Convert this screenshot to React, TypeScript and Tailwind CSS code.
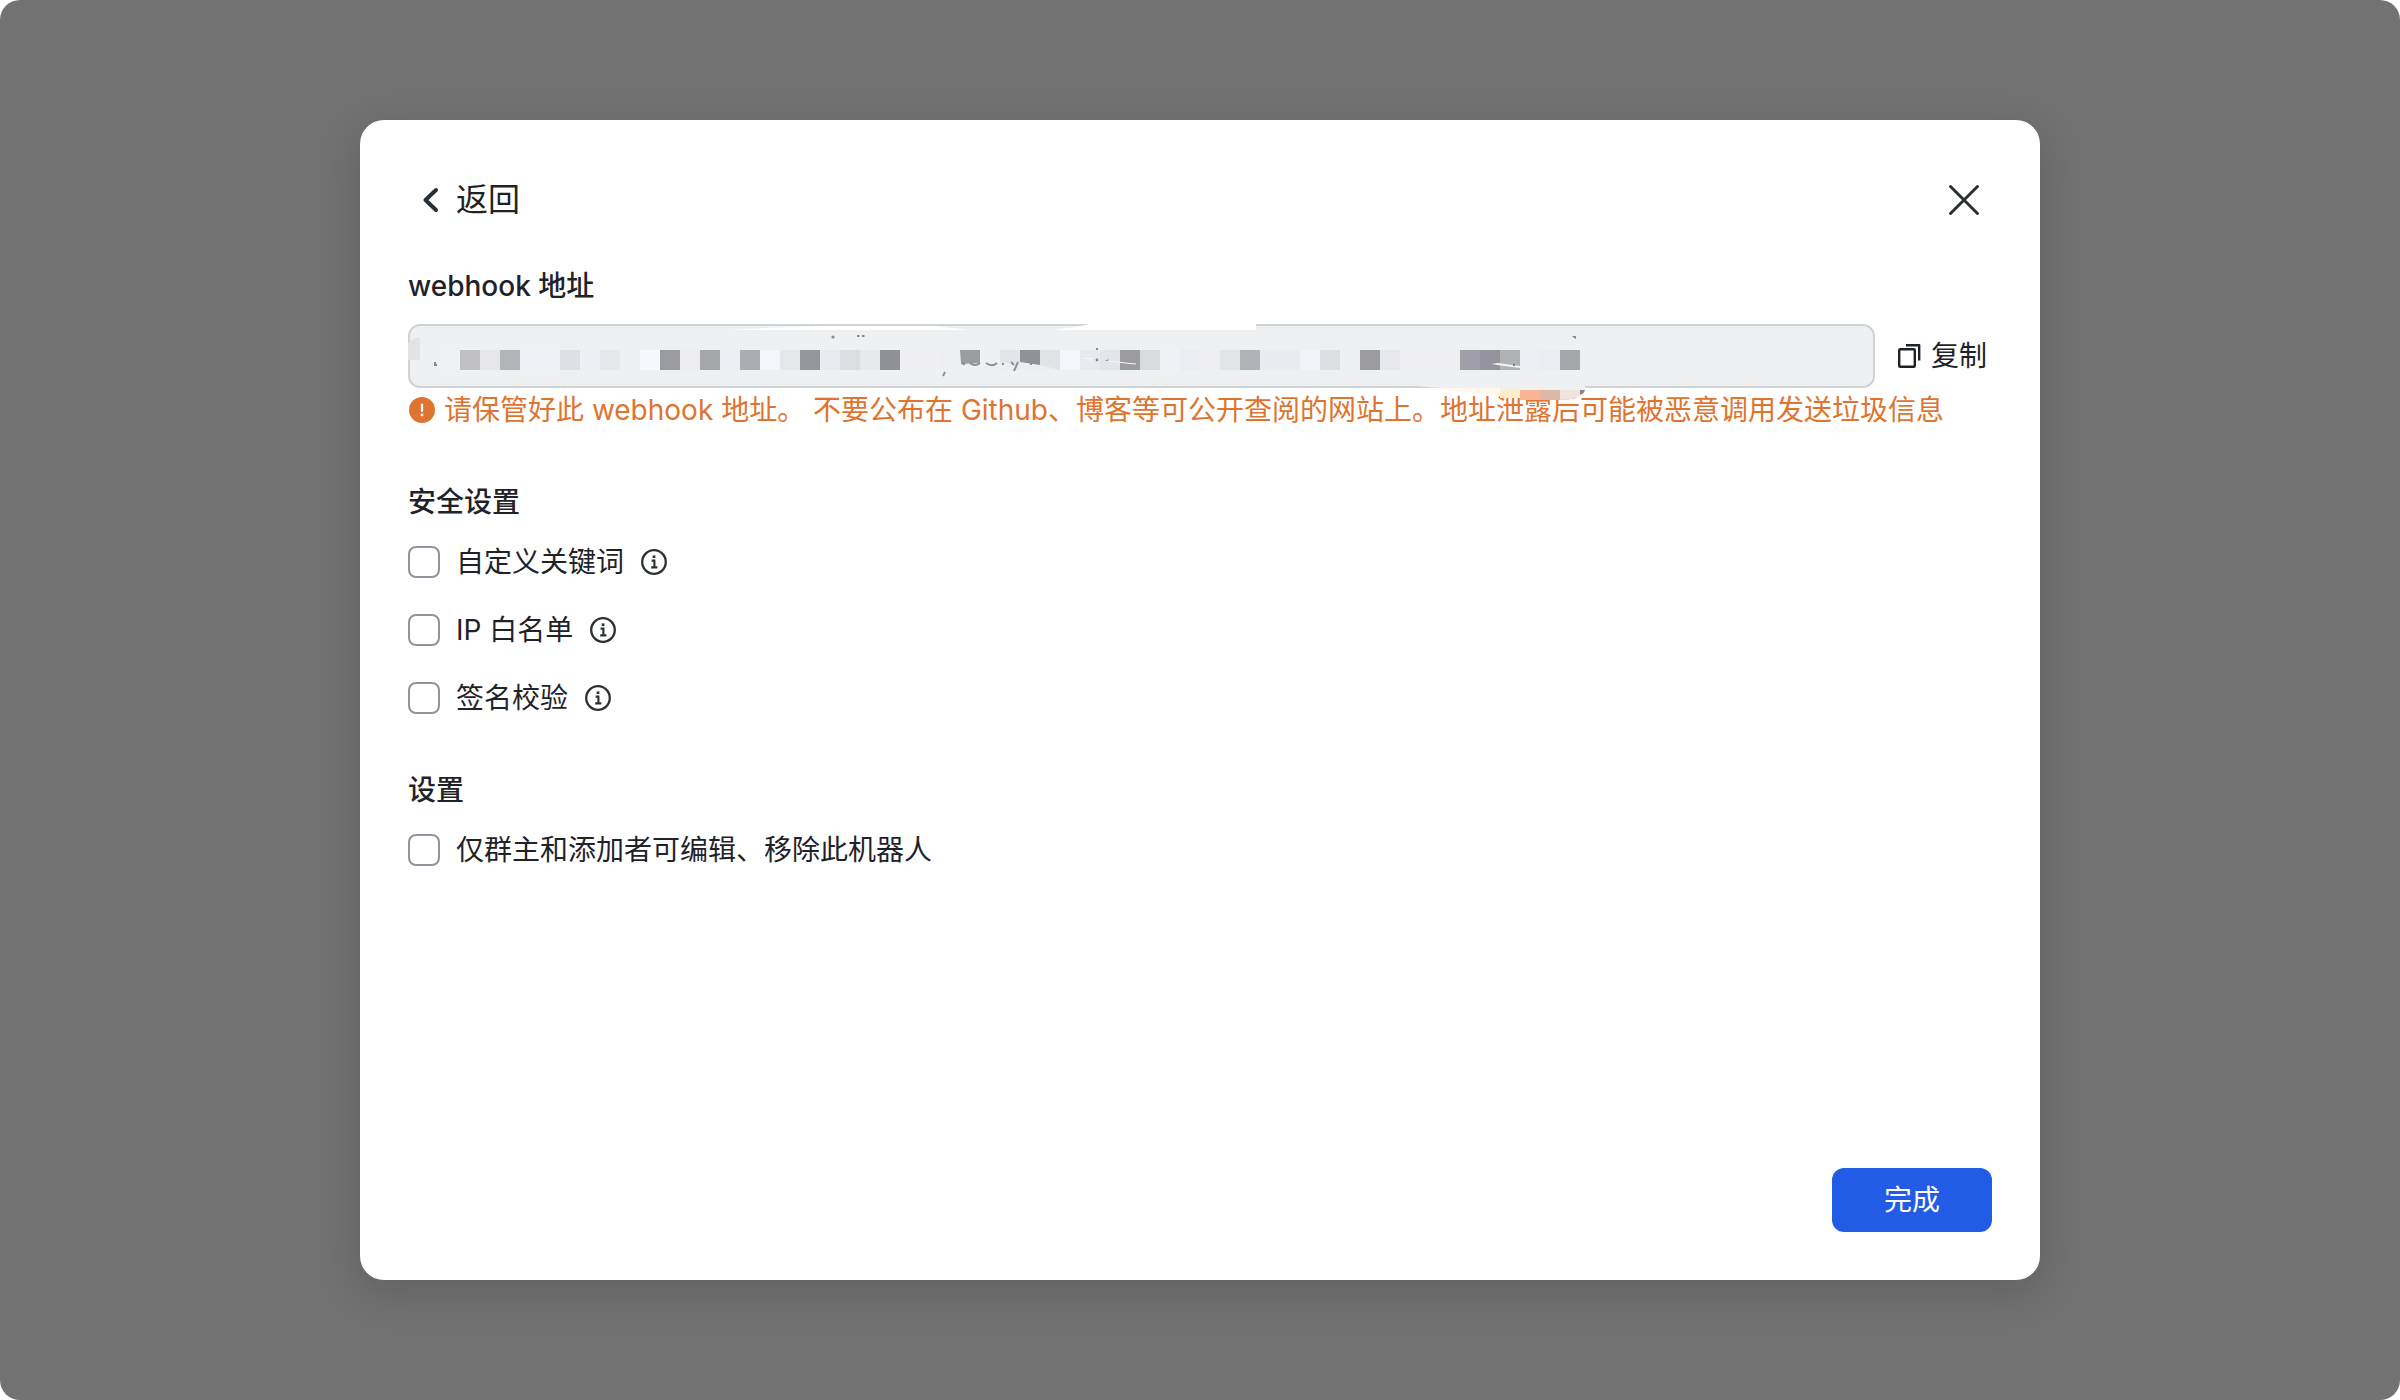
import React, { useState } from "react";

type Block = [x: number, fill: string];

/* Censor tiles, each 20 units wide, measured from the field's left edge. */
const TILES: Block[] = [
  [32, "#f0f1f5"], [52, "#bfbfc4"], [72, "#e7e7eb"], [92, "#b3b4b8"],
  [112, "#eff1f6"], [132, "#eff1f6"], [152, "#dfe0e5"], [172, "#eff0f5"],
  [192, "#e6e7eb"], [212, "#eff0f3"], [232, "#f7f8fd"], [252, "#9a9b9f"],
  [272, "#ededf2"], [292, "#a5a6aa"], [312, "#eeeff4"], [332, "#abaeb2"],
  [352, "#f5f6fb"], [372, "#e6e7e8"], [392, "#95969b"], [412, "#e9eaef"],
  [432, "#dcdde1"], [452, "#e8e9ed"], [472, "#909196"], [492, "#efeff4"],
  [512, "#efeff4"], [532, "#eeeff2"], [592, "#e4e5e9"], [632, "#e2e3e7"],
  [652, "#f5f6fb"], [672, "#e9eaee"], [692, "#e4e5ea"], [712, "#9b9b9f"],
  [732, "#dadbdf"], [752, "#f0f1f5"], [772, "#ecedf2"], [792, "#eeeef3"],
  [812, "#e3e4e6"], [832, "#b2b3b7"], [852, "#ebecf1"], [872, "#ebecf1"],
  [892, "#f2f3f8"], [912, "#dce0e3"], [932, "#eff0f1"], [952, "#9a9a9f"],
  [972, "#e7e8ed"], [992, "#eeeef3"], [1012, "#eeeef3"], [1032, "#eeeef3"],
  [1052, "#a09fa9"], [1072, "#94939e"], [1092, "#b0b1b4"], [1112, "#eeeff4"],
  [1132, "#ecedf2"], [1152, "#a6a7aa"],
];

function Mosaic() {
  return (
    <svg
      className="pointer-events-none absolute top-0 left-0"
      width="1200"
      height="84"
      viewBox="0 0 1200 84"
      aria-hidden="true"
    >
      {/* smudges across the field's border */}
      <path d="M322 6Q390 2 440 2H525Q545 4 560 6Z" fill="#fff" />
      <path d="M645 6Q670 3 682 0H848V6Z" fill="#fff" />
      <path d="M0 20Q4 14 12 13V36H0Z" fill="#e3e3e4" />
      <path d="M1008 61H1177V66H1060Q1030 64 1008 62Z" fill="#eff0f1" />

      {TILES.map(([x, fill]) => (
        <rect key={x} x={x} y="26" width="20" height="20" fill={fill} />
      ))}
      <path d="M552 26H572V39L553 40Z" fill="#9b9c9f" />
      <path d="M612 26H632V41L612 38Z" fill="#919298" />
      <path d="M592 39Q625 38 652 46H592Z" fill="#edeef1" />

      {/* specks left uncovered */}
      <g fill="#85888d">
        <path d="M26 38H28V40H29V42H26Z" />
        <circle cx="425" cy="13" r="1.6" />
        <rect x="449" y="11" width="2.5" height="2" />
        <rect x="454" y="11" width="2.5" height="2" />
        <rect x="688" y="24" width="2" height="2" />
        <circle cx="689" cy="36" r="1.4" />
        <path d="M697 37L701 35L700 37Z" />
        <path d="M1164 12H1168V15L1166 14Z" />
        <rect x="1105" y="40" width="2" height="2" />
      </g>
      <g stroke="#8d9095" strokeWidth="2" fill="none">
        <path d="M537 48L535 52" />
        <path d="M554 39L557 40.5" />
        <path d="M562 39Q567 43 572 39" />
        <path d="M578 39Q584 43.5 589 39" />
        <path d="M595 39V41M603 38L606 41" />
        <path d="M610 38L606 47" />
        <path d="M623 38V41" />
      </g>
      <path d="M676 34L684 35" stroke="#fbfbfd" strokeWidth="1" />
      <path d="M700 37L722 39.5L728 40" stroke="#f6f7fa" strokeWidth="1" fill="none" />
      <path d="M1083 40L1090 39L1112 42V44L1096 42Z" fill="#f1f2f5" />
      <rect x="1105" y="40" width="2" height="2" fill="#777a80" />

      {/* warm tiles that spill onto the notice below */}
      <path d="M1032 64H1092V72Q1060 68 1032 66Z" fill="#fff8ec" />
      <rect x="1092" y="66" width="20" height="8" fill="#ffeccb" />
      <rect x="1112" y="66" width="20" height="10" fill="#fab495" />
      <rect x="1132" y="66" width="20" height="10" fill="#dcb8a6" />
      <path d="M1152 66H1172V72Q1164 76 1152 76Z" fill="#efe4de" />
      <path d="M1172 66H1177Q1176 70 1172 71Z" fill="#8f8480" />
    </svg>
  );
}

function InfoIcon() {
  return (
    <svg width="28" height="28" viewBox="0 0 28 28" fill="none" stroke="#2b2f36" aria-hidden="true">
      <circle cx="14" cy="14" r="11.8" strokeWidth="2.3" />
      <path d="M11.6 12.6H14.4V19M11.2 19.4H17.4" strokeWidth="2.1" />
      <rect x="12.7" y="7.4" width="2.7" height="2.7" fill="#2b2f36" stroke="none" />
    </svg>
  );
}

function Option({ id, label, info }: { id: string; label: string; info?: boolean }) {
  const [checked, setChecked] = useState(false);
  return (
    <div className="flex h-11 items-center">
      <input
        id={id}
        type="checkbox"
        checked={checked}
        onChange={(e) => setChecked(e.target.checked)}
        className="size-8 shrink-0 appearance-none rounded-lg border-2 border-[#8f959e] bg-white checked:border-[#245be6] checked:bg-[#245be6]"
      />
      <label htmlFor={id} className="pl-4">
        {label}
      </label>
      {info && (
        <button type="button" aria-label={`${label}说明`} className="ml-4">
          <InfoIcon />
        </button>
      )}
    </div>
  );
}

export default function App() {
  return (
    <div className="min-h-screen bg-white font-['Inter','Noto_Sans_CJK_SC',sans-serif] text-[28px] leading-11 text-[#1f2329]">
      <div className="flex min-h-screen items-center justify-center rounded-[20px] bg-[#727272] px-6 py-[120px]">
        <main className="flex min-h-[1160px] w-full max-w-[1680px] flex-col rounded-3xl bg-white p-12 shadow-[0_12px_40px_rgba(31,35,41,0.22)]">
          <header className="flex h-16 items-center justify-between pr-3 pl-3">
            <button type="button" className="flex items-center gap-3 text-[32px] leading-12">
              <svg width="24" height="32" viewBox="0 0 24 32" fill="none" stroke="#2b2f36" strokeWidth="4" strokeLinecap="round" strokeLinejoin="round" aria-hidden="true">
                <path d="M16 6L5.5 16L16 26" />
              </svg>
              返回
            </button>
            <button type="button" aria-label="关闭">
              <svg width="32" height="32" viewBox="0 0 32 32" fill="none" stroke="#2b2f36" strokeWidth="3" strokeLinecap="round" aria-hidden="true">
                <path d="M2.5 2.5L29.5 29.5M29.5 2.5L2.5 29.5" />
              </svg>
            </button>
          </header>

          <section className="mt-8">
            <label htmlFor="webhook" className="block font-medium">
              webhook 地址
            </label>
            <div className="mt-4 flex items-center">
              <div className="relative flex-1">
                <input
                  id="webhook"
                  readOnly
                  className="block h-16 w-full rounded-xl border-2 border-[#d0d3d6] bg-[#eff0f1] px-6 outline-none"
                />
                <Mosaic />
              </div>
              <button type="button" className="flex items-center gap-2 pr-[5px] pl-5">
                <svg width="28" height="28" viewBox="0 0 28 28" fill="none" stroke="#1f2329" strokeWidth="2.4" strokeLinejoin="round" aria-hidden="true">
                  <rect x="4.2" y="7.2" width="15.6" height="17.6" rx="1" />
                  <path d="M11 3.2H24.2V18.6" />
                </svg>
                复制
              </button>
            </div>
            <p className="flex items-center gap-2 text-[#de7430]">
              <svg className="shrink-0" width="28" height="28" viewBox="0 0 28 28" aria-hidden="true">
                <circle cx="14" cy="14" r="13" fill="#de7430" />
                <path d="M14 8.5V15" stroke="#fff" strokeWidth="2.2" strokeLinecap="round" />
                <circle cx="14" cy="19" r="1.4" fill="#fff" />
              </svg>
              <span>请保管好此 webhook 地址。 不要公布在 Github、博客等可公开查阅的网站上。地址泄露后可能被恶意调用发送垃圾信息</span>
            </p>
          </section>

          <section className="mt-12">
            <h2 className="font-medium">安全设置</h2>
            <div className="mt-4 flex flex-col gap-6">
              <Option id="keywords" label="自定义关键词" info />
              <Option id="ip" label="IP 白名单" info />
              <Option id="signature" label="签名校验" info />
            </div>
          </section>

          <section className="mt-12">
            <h2 className="font-medium">设置</h2>
            <div className="mt-4">
              <Option id="owner" label="仅群主和添加者可编辑、移除此机器人" />
            </div>
          </section>

          <footer className="mt-auto flex justify-end">
            <button type="button" className="h-16 w-40 rounded-xl bg-[#225ce6] text-white">
              完成
            </button>
          </footer>
        </main>
      </div>
    </div>
  );
}
